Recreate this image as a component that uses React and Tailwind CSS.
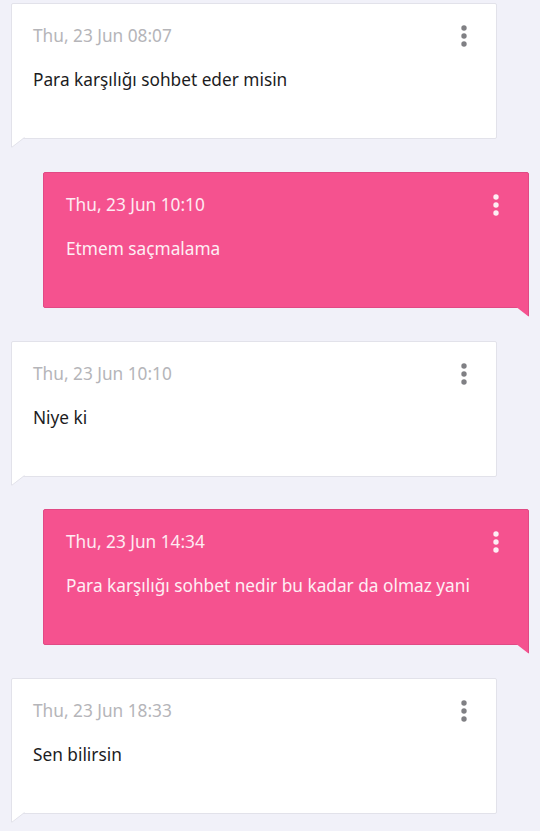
import React from "react";

const messages = [
  { mine: false, date: "Thu, 23 Jun 08:07", text: "Para karşılığı sohbet eder misin" },
  { mine: true, date: "Thu, 23 Jun 10:10", text: "Etmem saçmalama" },
  { mine: false, date: "Thu, 23 Jun 10:10", text: "Niye ki" },
  { mine: true, date: "Thu, 23 Jun 14:34", text: "Para karşılığı sohbet nedir bu kadar da olmaz yani" },
  { mine: false, date: "Thu, 23 Jun 18:33", text: "Sen bilirsin" },
];

function Dots({ color }) {
  return (
    <svg width="8" height="24" viewBox="0 0 8 24" className="shrink-0">
      <circle cx="4" cy="4" r="2.7" fill={color} />
      <circle cx="4" cy="12" r="2.7" fill={color} />
      <circle cx="4" cy="20" r="2.7" fill={color} />
    </svg>
  );
}

function Bubble({ mine, date, text }) {
  if (mine) {
    return (
      <div className="relative ml-[43px] w-[486px] h-[136px] shrink-0 bg-[#f5528f] border border-[#e14a85] rounded-[2px]">
        <svg
          width="14"
          height="11"
          viewBox="0 0 14 11"
          className="absolute right-[-1px] bottom-[-10px]"
        >
          <polygon points="0,0 14,0 14,10 13.5,10.5" fill="#f5528f" />
          <line x1="13.5" y1="0" x2="13.5" y2="10" stroke="#e14a85" strokeWidth="1" />
        </svg>
        <div className="flex items-start justify-between pl-[22px] pr-[28px] pt-[20px]">
          <div className="text-[17.25px] leading-[24px] text-[#feeaf2]">{date}</div>
          <Dots color="#fdeef4" />
        </div>
        <div className="pl-[22px] pt-[20px] text-[17.25px] leading-[24px] text-[#feeef4]">{text}</div>
      </div>
    );
  }
  return (
    <div className="relative ml-[11px] w-[486px] h-[136px] shrink-0 bg-white border border-[#e2e2ea] rounded-[2px]">
      <svg
        width="14"
        height="11"
        viewBox="0 0 14 11"
        className="absolute left-[-1px] bottom-[-10px]"
      >
        <polygon points="0,0 14,0 0.5,10.5 0,10" fill="#ffffff" />
        <line x1="0.5" y1="0" x2="0.5" y2="10" stroke="#e2e2ea" strokeWidth="1" />
        <line x1="0.5" y1="10.5" x2="13.5" y2="0.5" stroke="#e2e2ea" strokeWidth="1" />
      </svg>
      <div className="flex items-start justify-between pl-[21px] pr-[28px] pt-[20px]">
        <div className="text-[17.25px] leading-[24px] text-[#b5b5b9]">{date}</div>
        <Dots color="#808084" />
      </div>
      <div className="pl-[21px] pt-[20px] text-[17.25px] leading-[24px] text-[#1c1c1e]">{text}</div>
    </div>
  );
}

export default function App() {
  return (
    <div
      className="w-[540px] h-[831px] overflow-hidden bg-[#f1f1f9] pt-[3px] flex flex-col gap-[32.75px]"
      style={{ fontFamily: '"Noto Sans", "Open Sans", sans-serif' }}
    >
      {messages.map((m, i) => (
        <Bubble key={i} {...m} />
      ))}
    </div>
  );
}
